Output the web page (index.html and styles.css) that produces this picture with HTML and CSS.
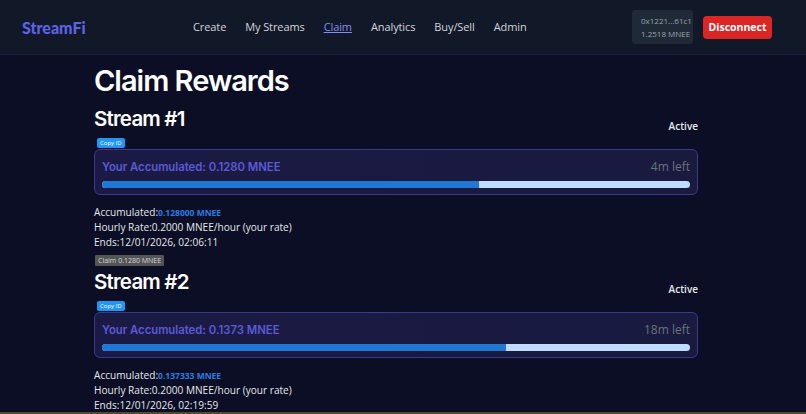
FILE: index.html
```html
<!DOCTYPE html>
<html>
<head>
<meta charset="utf-8">
<link rel="stylesheet" href="styles.css">
</head>
<body>
<header class="topbar">
  <div class="logo">StreamFi</div>
  <nav class="nav">
    <a class="nav-link">Create</a>
    <a class="nav-link">My Streams</a>
    <a class="nav-link active">Claim</a>
    <a class="nav-link">Analytics</a>
    <a class="nav-link">Buy/Sell</a>
    <a class="nav-link">Admin</a>
  </nav>
  <div class="account">
    <div class="wallet">
      <div>0x1221...61c1</div>
      <div>1.2518 MNEE</div>
    </div>
    <button class="disconnect">Disconnect</button>
  </div>
</header>
<main class="content">
  <h1 class="title">Claim Rewards</h1>

  <section class="stream">
    <div class="stream-head">
      <h2 class="stream-title">Stream #1</h2>
      <span class="status">Active</span>
    </div>
    <button class="copy-btn">Copy ID</button>
    <div class="card">
      <div class="card-row">
        <span class="acc">Your Accumulated: 0.1280 MNEE</span>
        <span class="left">4m left</span>
      </div>
      <div class="bar"><div class="fill" style="width:64.1%"></div></div>
    </div>
    <div class="details">
      <div>Accumulated:<span class="val">0.128000 MNEE</span></div>
      <div>Hourly Rate:0.2000 MNEE/hour (your rate)</div>
      <div>Ends:12/01/2026, 02:06:11</div>
    </div>
    <button class="claim-btn">Claim 0.1280 MNEE</button>
  </section>

  <section class="stream">
    <div class="stream-head">
      <h2 class="stream-title">Stream #2</h2>
      <span class="status">Active</span>
    </div>
    <button class="copy-btn">Copy ID</button>
    <div class="card">
      <div class="card-row">
        <span class="acc">Your Accumulated: 0.1373 MNEE</span>
        <span class="left">18m left</span>
      </div>
      <div class="bar"><div class="fill" style="width:68.7%"></div></div>
    </div>
    <div class="details">
      <div>Accumulated:<span class="val">0.137333 MNEE</span></div>
      <div>Hourly Rate:0.2000 MNEE/hour (your rate)</div>
      <div>Ends:12/01/2026, 02:19:59</div>
    </div>
    <button class="claim-btn">Claim 0.1373 MNEE</button>
  </section>
</main>
<div class="edge"></div>
</body>
</html>
```
FILE: styles.css
```css
* { box-sizing: border-box; }
html, body { margin: 0; padding: 0; }
body {
  background: #0b0e24;
  color: #e5e7eb;
  font-family: "Open Sans", "Noto Sans", sans-serif;
  overflow: hidden;
  height: 414px;
}
.topbar {
  height: 55px;
  background: #111827;
  border-bottom: 1px solid #1a2233;
  display: flex;
  align-items: center;
  padding: 0 34px 0 22px;
}
.logo {
  font-family: "Lato", sans-serif;
  font-weight: 900;
  font-size: 16px;
  color: #5f62e6;
  width: 171px;
}
.nav {
  display: flex;
  gap: 19px;
  flex: 1;
  margin-top: -1px;
}
.nav-link {
  font-size: 11px;
  letter-spacing: -0.1px;
  color: #d1d5db;
  font-weight: 500;
}
.nav-link.active {
  color: #818cf8;
  text-decoration: underline;
}
.account {
  display: flex;
  align-items: center;
  gap: 10px;
}
.wallet {
  background: #1f2937;
  border-radius: 3px;
  padding: 0 0 0 9px;
  width: 61px;
  font-size: 8px;
  line-height: 13px;
  color: #9ca3af;
  height: 34px;
  display: flex;
  flex-direction: column;
  justify-content: center;
}
.disconnect {
  background: #dc2626;
  color: #fff;
  border: none;
  border-radius: 4px;
  font-family: "Open Sans", sans-serif;
  font-weight: 700;
  font-size: 10.5px;
  height: 23px;
  width: 69px;
  padding: 0;
}
.content {
  margin-left: 94px;
  width: 604px;
}
.title {
  font-family: "Inter", sans-serif;
  font-weight: 600;
  font-size: 29px;
  letter-spacing: -1px;
  color: #fff;
  margin: 0;
  padding-top: 7px;
  padding-bottom: 3px;
  line-height: 38px;
}
.stream-head {
  display: flex;
  justify-content: space-between;
  align-items: flex-end;
  height: 30px;
}
.stream-title {
  font-family: "Inter", sans-serif;
  font-weight: 600;
  font-size: 20.5px;
  letter-spacing: -0.8px;
  color: #fff;
  margin: 0;
  line-height: 28px;
}
.status {
  font-size: 10px;
  font-weight: 600;
  color: #e5e7eb;
}
.copy-btn {
  display: block;
  margin: 5px 0 0 3px;
  background: #2196f3;
  color: #fff;
  border: none;
  border-radius: 2px;
  font-family: "Open Sans", sans-serif;
  font-size: 6px;
  padding: 0 3px;
  height: 10px;
  line-height: 10px;
}
.card {
  margin-top: 1px;
  border: 1px solid #3a3a8c;
  border-radius: 6px;
  background: linear-gradient(90deg, #1b1a45, #191a3e);
  padding: 9px 7px 7px 7px;
  height: 46px;
}
.card-row {
  display: flex;
  justify-content: space-between;
  align-items: center;
  height: 15px;
}
.acc {
  font-family: "Inter", sans-serif;
  font-weight: 600;
  font-size: 11.3px;
  color: #5b5bd6;
}
.left {
  font-size: 12px;
  color: #6b7280;
}
.bar {
  margin-top: 7px;
  height: 7px;
  border-radius: 4px;
  background: #bfdbfe;
  overflow: hidden;
}
.fill {
  height: 100%;
  background: #1e78d4;
}
.details {
  margin-top: 10px;
  font-size: 10.1px;
  line-height: 15px;
  color: #e5e7eb;
}
.val {
  color: #2a7de1;
  font-size: 8.5px;
  font-weight: 700;
}
.claim-btn {
  display: block;
  margin: 5px 0 0 1px;
  background: #555;
  color: #d1d5db;
  border: none;
  border-radius: 1px;
  font-family: "Open Sans", sans-serif;
  font-size: 7px;
  height: 11px;
  line-height: 11px;
  padding: 0 3px;
}
.edge {
  position: fixed;
  left: 0;
  right: 0;
  bottom: 0;
  height: 2px;
  background: #4d4c2c;
}
```
